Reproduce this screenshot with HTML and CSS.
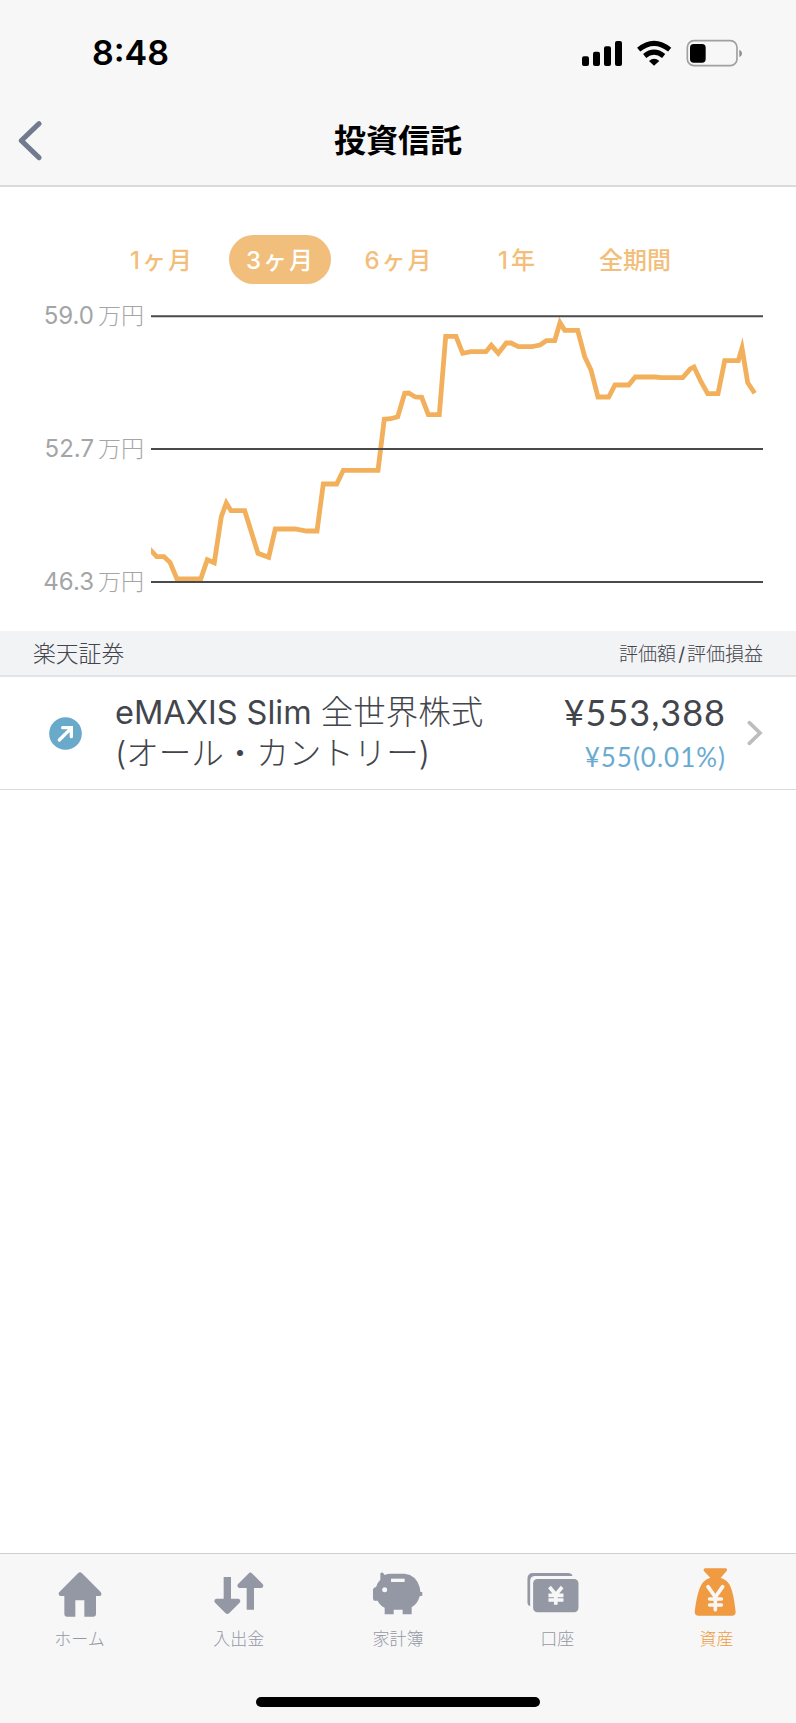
FILE: index.html
```
<!DOCTYPE html>
<html lang="ja">
<head>
    <meta charset="UTF-8">
    <meta name="viewport" content="width=device-width, initial-scale=1.0">
    <title>投資信託</title>
    <link rel="stylesheet" href="styles.css">
</head>
<body>
    <header class="header">
        <div class="status">
            <div class="time">8:48</div>
            <svg class="status-icons" viewBox="555 115 486 87">
                <rect x="558" y="167" width="21" height="29" rx="6"/>
                <rect x="591" y="153" width="21" height="43" rx="6"/>
                <rect x="624" y="137" width="21" height="59" rx="6"/>
                <rect x="657" y="121" width="21" height="75" rx="6"/>
                <g fill="none" stroke="#000" stroke-width="15">
                    <path d="M728 147Q774 109 821 147"/>
                    <path d="M746 166Q774 143 803 166"/>
                </g>
                <path d="M759 181Q774 167 790 181L774 195Z"/>
                <rect x="874" y="120" width="149" height="75" rx="20" fill="none" stroke="#a0a0a0" stroke-width="5"/>
                <rect x="882" y="130" width="47" height="56" rx="11"/>
                <path d="M1030 147Q1038 150 1038 158T1030 169Z" fill="#8e8e8e"/>
            </svg>
        </div>
        <div class="nav">
            <svg class="back" viewBox="54 360 72 123"><path d="M117 371L64 422L117 473"/></svg>
            <h1 class="title">投資信託</h1>
        </div>
    </header>

    <main class="main">
        <div class="periods">
            <button class="period">1<span class="ke">ヶ</span>月</button>
            <button class="period active">3<span class="ke">ヶ</span>月</button>
            <button class="period">6<span class="ke">ヶ</span>月</button>
            <button class="period"><span class="one">1</span>年</button>
            <button class="period">全期間</button>
        </div>

        <div class="chart">
            <div class="labels">
                <div>59.0<span>万円</span></div>
                <div>52.7<span>万円</span></div>
                <div>46.3<span>万円</span></div>
            </div>
            <svg class="plot" viewBox="151 306 612 286">
                <polyline class="value" points="147,546 151,550.5 156.7,556.7 164,556.7 170,562.3 177,579 200.7,579 207.3,559.7 214.3,562.7 221.3,516.7 226.3,503 231,510.7 244.7,510.7 258,553.3 268.7,557.3 275.3,529 295,529 306.7,531 317,531 323.3,484 336.7,484 343.3,470.3 378,470.3 384.3,419.3 390.7,418.7 397.7,416.7 404.7,393.3 408.7,393 415.3,397 421.7,397.3 428.3,414.7 439.3,414.7 445.7,336.3 456,336.3 462.7,353.3 471,351.7 486,351.7 491.3,345.3 498.3,353.3 506.3,343 511,343 518.3,346.7 532,346.7 540,345 546.3,340.7 554.7,340.7 560,322.7 564.7,330.3 577.7,330.3 584.7,356.7 591,370 598,397 608.7,397 615,385 628.7,385 635.3,377 655.7,377 661,377.7 682.7,377.7 690.3,369 694,367 701,381.7 707.7,393.7 718,393.7 724.7,360.7 738.3,360.7 742,348 747.7,382.7 754.7,393.3"/>
                <path class="grid" d="M151 316.3H763M151 449H763M151 582H763"/>
            </svg>
        </div>

        <div class="group">
            <div class="broker">楽天証券</div>
            <div class="columns">評価額<span>/</span>評価損益</div>
        </div>

        <a class="fund">
            <svg class="trend" viewBox="0 0 99 99">
                <circle cx="49.500" cy="49.500" r="49" fill="#69a9ca"/>
                <path d="M31 69L66 34M41 32H67V59" fill="none" stroke="#fff" stroke-width="10" stroke-linecap="round"/>
            </svg>
            <div class="name"><span class="latin">eMAXIS Slim</span> 全世界株式<br><span class="kana">(オール・カントリー)</span></div>
            <div class="amount">
                <div class="price">¥553,388</div>
                <div class="profit">¥55(0.01%)</div>
            </div>
            <svg class="arrow" viewBox="1053 300 48 78"><path d="M1060 308L1092 339L1060 370"/></svg>
        </a>
    </main>

    <footer class="footer">
        <nav class="tabs">
            <a class="tab">
                <svg viewBox="158 78 162 162">
                    <path d="M239 97Q242 97 245 100L301 156Q304 160 303 165Q302 168 297 168H287V223Q287 230 280 230H252V181H225V230H199Q192 230 192 223V168H181Q175 168 175 162Q174 158 178 155L233 100Q236 97 239 97Z"/>
                </svg>
                <div>ホーム</div>
            </a>
            <a class="tab">
                <svg viewBox="636 78 162 162">
                    <path d="M671 111H693V176H715Q721 177 721 183Q721 186 718 189L688 219Q682 225 676 219L646 189Q643 186 643 183Q643 177 649 176H671Z"/>
                    <path d="M740 209V144H718Q712 143 712 137Q712 134 715 131L745 101Q751 94 757 101L787 131Q790 134 790 137Q790 143 784 144H762V209Z"/>
                </svg>
                <div>入出金</div>
            </a>
            <a class="tab">
                <svg viewBox="213 78 162 162">
                    <path d="M241 101Q243 96 249 98L254 105Q260 101 275 101H314Q349 105 359 142L361 155L367 157V167L359 169Q353 192 335 202V223H308V209H281V223H254V203Q239 196 233 182H222L219 176V148L224 142H228Q231 128 241 119Z"/>
                    <path class="hole" d="M273 116H314V126H273Z"/>
                    <circle class="hole" cx="254" cy="149" r="7.500"/>
                </svg>
                <div>家計簿</div>
            </a>
            <a class="tab">
                <svg viewBox="690.600 78 162 162">
                    <path d="M691 199Q683 196 683 189V116Q683 99 700 99H805Q816 99 818 108H704Q692 109 691 122Z"/>
                    <rect x="700" y="117" width="136" height="100" rx="13"/>
                    <path class="yen" d="M749 141L768 164L787 141M768 163V194M746 166H791M746 180H791" stroke-width="11"/>
                </svg>
                <div>口座</div>
            </a>
            <a class="tab current">
                <svg viewBox="568 78 162 162">
                    <path d="M616 85H679Q685 88 681 93L663 113Q684 120 692 139Q702 160 708 216Q708 227 697 227H597Q585 227 585 216Q590 172 600 145Q609 120 632 113L612 92Q611 86 616 85Z"/>
                    <path class="yen" d="M625 140L647 171L669 140M647 171V209M630 177H665M630 195H665" stroke-width="11" stroke-linecap="round"/>
                </svg>
                <div>資産</div>
            </a>
        </nav>
        <div class="home-bar"></div>
    </footer>
</body>
</html>
```
FILE: styles.css
```
* {
    box-sizing: border-box;
}
body {
    font-family: Inter, "Noto Sans CJK JP", sans-serif;
    background: #fff;
    color: #42454c;
    margin: 0;
    min-height: 1723px;
    display: flex;
    flex-direction: column;
}
svg {
    display: block;
    flex: none;
}
.header {
    height: 187px;
    background: #f7f7f7;
    border-bottom: 2px solid #dadada;
}
.status {
    height: 106px;
    padding: 0 53px 0 92px;
    display: flex;
    align-items: center;
    justify-content: space-between;
}
.time {
    color: #000;
    font-size: 34px;
    font-weight: 600;
    line-height: 1;
}
.status-icons {
    width: 162px;
    height: 29px;
}
.nav {
    height: 70px;
    padding: 0 18px;
    display: grid;
    grid-template-columns: 24px 1fr 24px;
    align-items: center;
}
.back {
    width: 24px;
    height: 41px;
    margin-bottom: 2px;
}
.back path {
    fill: none;
    stroke: #717a8f;
    stroke-width: 15;
    stroke-linecap: round;
    stroke-linejoin: round;
}
.title {
    margin: 0;
    color: #000;
    font-size: 32px;
    line-height: 40px;
    text-align: center;
}
.main {
    flex: 1;
}
.periods {
    display: grid;
    grid-template-columns: repeat(5, 118.5px);
    justify-content: center;
    justify-items: center;
    padding-top: 48px;
}
.period {
    width: 102px;
    height: 49px;
    padding: 0 0 3px;
    border: none;
    border-radius: 25px;
    background: none;
    color: #f3be7a;
    font-family: inherit;
    font-size: 24px;
    font-weight: 500;
    white-space: nowrap;
    cursor: pointer;
}
.period .ke {
    margin: 0 2px;
}
.period .one {
    margin-right: 3px;
}
.period.active {
    background: #f2be7c;
    color: #fff;
}
.chart {
    display: flex;
    justify-content: space-between;
    padding: 22px 33px 39px 30px;
}
.labels {
    width: 114px;
    height: 286px;
    display: flex;
    flex-direction: column;
    justify-content: space-between;
    color: #a4a5a6;
    font-size: 24px;
    line-height: 20px;
    text-align: right;
    white-space: nowrap;
}
.labels span {
    margin-left: 4px;
    font-size: 23px;
    font-weight: 300;
}
.plot {
    width: 612px;
    height: 286px;
}
.value {
    fill: none;
    stroke: #f2b05c;
    stroke-width: 4.8;
    stroke-miterlimit: 10;
}
.grid {
    stroke: #4a4a4c;
    stroke-width: 2;
}
.group {
    height: 46px;
    padding: 0 33px 2px 33px;
    display: flex;
    align-items: center;
    justify-content: space-between;
    background: #f2f3f5;
    border-bottom: 2px solid #e2e4e6;
    font-weight: 300;
}
.broker {
    font-size: 22.8px;
}
.columns {
    font-size: 19px;
}
.columns span {
    margin: 0 2px;
    font-weight: 400;
}
.fund {
    height: 113px;
    padding: 0 33px 0 49px;
    display: flex;
    align-items: center;
    border-bottom: 1px solid #d8dadd;
}
.trend {
    width: 33px;
    height: 33px;
}
.name {
    flex: 1;
    margin-left: 33px;
    font-size: 32.5px;
    font-weight: 300;
    line-height: 41px;
    white-space: nowrap;
}
.latin {
    font-weight: 400;
}
.amount {
    font-family: Lato, sans-serif;
    text-align: right;
    margin-right: 21px;
}
.price {
    padding-top: 2px;
    font-size: 36px;
    line-height: 46px;
    letter-spacing: 1px;
}
.profit {
    color: #69abd0;
    font-size: 26px;
    line-height: 44px;
    letter-spacing: 1px;
}
.arrow {
    width: 16px;
    height: 26px;
}
.arrow path {
    fill: none;
    stroke: #bdbdbd;
    stroke-width: 11;
    stroke-linecap: round;
}
.footer {
    height: 170px;
    background: #f7f7f7;
    border-top: 1px solid #d0d0d0;
}
.tabs {
    height: 143px;
    padding-top: 12px;
    display: grid;
    grid-template-columns: repeat(5, 1fr);
}
.tab {
    display: flex;
    flex-direction: column;
    align-items: center;
    color: #9498a5;
    font-size: 17px;
    font-weight: 300;
    line-height: 38px;
}
.tab svg {
    width: 54px;
    height: 54px;
    fill: currentColor;
    overflow: visible;
}
.tab .hole {
    fill: #f7f7f7;
}
.tab .yen {
    fill: none;
    stroke: #f7f7f7;
}
.tab.current {
    color: #f09b41;
}
.home-bar {
    width: 284px;
    height: 10px;
    margin: 0 auto;
    border-radius: 5px;
    background: #000;
}
```
